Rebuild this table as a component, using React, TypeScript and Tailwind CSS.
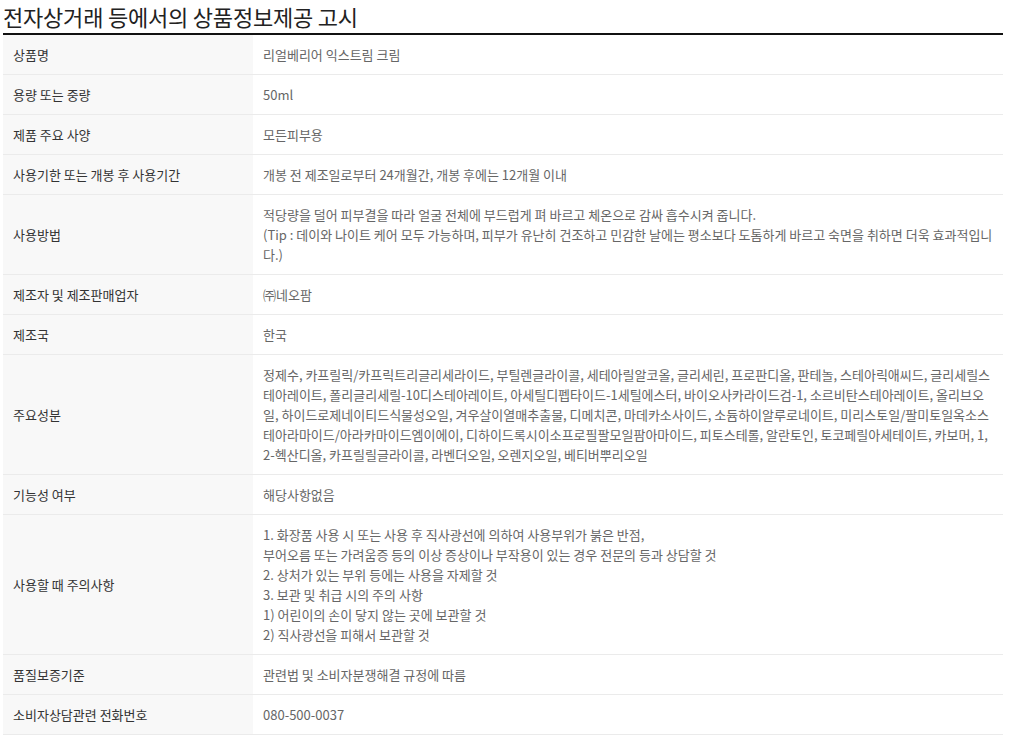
type Row = {
  label: string;
  lines: string[];
};

const rows: Row[] = [
  { label: "상품명", lines: ["리얼베리어 익스트림 크림"] },
  { label: "용량 또는 중량", lines: ["50ml"] },
  { label: "제품 주요 사양", lines: ["모든피부용"] },
  {
    label: "사용기한 또는 개봉 후 사용기간",
    lines: ["개봉 전 제조일로부터 24개월간, 개봉 후에는 12개월 이내"],
  },
  {
    label: "사용방법",
    lines: [
      "적당량을 덜어 피부결을 따라 얼굴 전체에 부드럽게 펴 바르고 체온으로 감싸 흡수시켜 줍니다.",
      "(Tip : 데이와 나이트 케어 모두 가능하며, 피부가 유난히 건조하고 민감한 날에는 평소보다 도톰하게 바르고 숙면을 취하면 더욱 효과적입니",
      "다.)",
    ],
  },
  { label: "제조자 및 제조판매업자", lines: ["㈜네오팜"] },
  { label: "제조국", lines: ["한국"] },
  {
    label: "주요성분",
    lines: [
      "정제수, 카프릴릭/카프릭트리글리세라이드, 부틸렌글라이콜, 세테아릴알코올, 글리세린, 프로판디올, 판테놀, 스테아릭애씨드, 글리세릴스",
      "테아레이트, 폴리글리세릴-10디스테아레이트, 아세틸디펩타이드-1세틸에스터, 바이오사카라이드검-1, 소르비탄스테아레이트, 올리브오",
      "일, 하이드로제네이티드식물성오일, 겨우살이열매추출물, 디메치콘, 마데카소사이드, 소듐하이알루로네이트, 미리스토일/팔미토일옥소스",
      "테아라마이드/아라카마이드엠이에이, 디하이드록시이소프로필팔모일팜아마이드, 피토스테롤, 알란토인, 토코페릴아세테이트, 카보머, 1,",
      "2-헥산디올, 카프릴릴글라이콜, 라벤더오일, 오렌지오일, 베티버뿌리오일",
    ],
  },
  { label: "기능성 여부", lines: ["해당사항없음"] },
  {
    label: "사용할 때 주의사항",
    lines: [
      "1. 화장품 사용 시 또는 사용 후 직사광선에 의하여 사용부위가 붉은 반점,",
      "부어오름 또는 가려움증 등의 이상 증상이나 부작용이 있는 경우 전문의 등과 상담할 것",
      "2. 상처가 있는 부위 등에는 사용을 자제할 것",
      "3. 보관 및 취급 시의 주의 사항",
      "1) 어린이의 손이 닿지 않는 곳에 보관할 것",
      "2) 직사광선을 피해서 보관할 것",
    ],
  },
  { label: "품질보증기준", lines: ["관련법 및 소비자분쟁해결 규정에 따름"] },
  { label: "소비자상담관련 전화번호", lines: ["080-500-0037"] },
];

const App = () => {
  return (
    <div
      className="w-[1013px] min-h-[743px] bg-white pl-[3px]"
      style={{ fontFamily: '"Noto Sans CJK KR", "Noto Sans", sans-serif' }}
    >
      <div className="w-[1000px]">
        <h2 className="h-[35px] pt-[1px] text-[22px] leading-[30px] text-[#222] tracking-[-0.2px] border-b-2 border-[#111]">
          전자상거래 등에서의 상품정보제공 고시
        </h2>
        <div className="flex flex-col">
          {rows.map((row) => (
            <div key={row.label} className="flex border-b border-[#ebebeb]">
              <div className="w-[250px] shrink-0 bg-[#f8f8f8] px-[10px] flex items-center text-[13px] leading-[20px] text-[#333]">
                {row.label}
              </div>
              <div className="flex-1 px-[10px] pt-[10px] pb-[9px] text-[13px] leading-[20px] text-[#666]">
                {row.lines.map((line, i) => (
                  <div key={i} className="whitespace-nowrap">
                    {line}
                  </div>
                ))}
              </div>
            </div>
          ))}
        </div>
      </div>
    </div>
  );
};

export default App;
